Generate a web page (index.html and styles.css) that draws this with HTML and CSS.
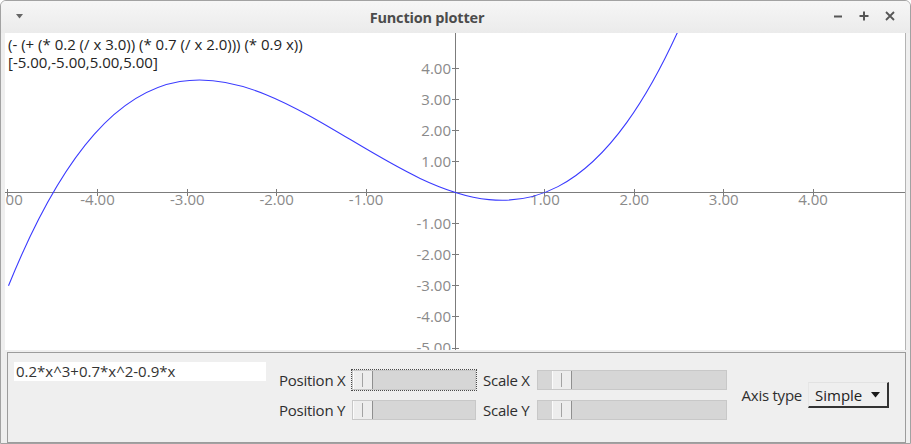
FILE: index.html
```html
<!DOCTYPE html>
<html>
<head>
<meta charset="utf-8">
<title>Function plotter</title>
<link rel="stylesheet" href="styles.css">
</head>
<body>
<div class="window">
  <div class="titlebar">
    <div class="tb-left">
      <svg class="menu-arrow" width="7" height="5" viewBox="0 0 7 5"><path d="M0 0H7L3.5 4.5Z" fill="#666"/></svg>
    </div>
    <div class="title">Function plotter</div>
    <div class="tb-buttons">
      <span class="tb-btn"><svg width="10" height="10" viewBox="0 0 10 10"><path d="M1 5.5H9" stroke="#565656" stroke-width="2"/></svg></span>
      <span class="tb-btn"><svg width="10" height="10" viewBox="0 0 10 10"><path d="M0.5 5H9.5M5 0.5V9.5" stroke="#565656" stroke-width="2"/></svg></span>
      <span class="tb-btn"><svg width="10" height="10" viewBox="0 0 10 10"><path d="M1 1L9 9M9 1L1 9" stroke="#565656" stroke-width="1.8"/></svg></span>
    </div>
  </div>
  <div class="content">
    <div class="plot">
      <svg class="plot-svg" width="900" height="317" viewBox="5 33 900 317">
        <g class="axes" stroke="#7c7c7c" stroke-width="1" fill="none">
          <path d="M5 192.5H905"/>
          <path d="M455.5 33V350"/>
          <path d="M7.5 189V196M97.5 189V196M187.5 189V196M276.5 189V196M366.5 189V196M544.5 189V196M634.5 189V196M723.5 189V196M813.5 189V196"/>
          <path d="M452 68.5H459M452 99.5H459M452 130.5H459M452 161.5H459M452 223.5H459M452 254.5H459M452 285.5H459M452 316.5H459M452 348.5H459"/>
        </g>
        <g class="xlabels" text-anchor="middle">
          <text x="5.5" y="204.5">-5.00</text>
          <text x="97.5" y="204.5">-4.00</text>
          <text x="187.3" y="204.5">-3.00</text>
          <text x="276.7" y="204.5">-2.00</text>
          <text x="366.1" y="204.5">-1.00</text>
          <text x="544.9" y="204.5">1.00</text>
          <text x="634.3" y="204.5">2.00</text>
          <text x="723.7" y="204.5">3.00</text>
          <text x="813.1" y="204.5">4.00</text>
        </g>
        <g class="ylabels" text-anchor="end">
          <text x="451" y="73.5">4.00</text>
          <text x="451" y="104.5">3.00</text>
          <text x="451" y="135.6">2.00</text>
          <text x="451" y="166.7">1.00</text>
          <text x="451" y="228.9">-1.00</text>
          <text x="451" y="260">-2.00</text>
          <text x="451" y="291.1">-3.00</text>
          <text x="451" y="322.2">-4.00</text>
          <text x="451" y="353.3">-5.00</text>
        </g>
        <path class="curve" d="M8.5 285.8C306.5 -450.23 604.5 1198.07 902.5 -989.3" fill="none" stroke="#3b3bff" stroke-width="1.1"/>
      </svg>
      <div class="expr">
        <div>(- (+ (* 0.2 (/ x 3.0)) (* 0.7 (/ x 2.0))) (* 0.9 x))</div>
        <div>[-5.00,-5.00,5.00,5.00]</div>
      </div>
    </div>
    <div class="panel">
      <div class="formula">0.2*x^3+0.7*x^2-0.9*x</div>
      <div class="sliders">
        <span class="label">Position X</span>
        <div class="slider focused"><div class="handle"></div></div>
        <span class="label">Scale X</span>
        <div class="slider"><div class="handle handle-scale"></div></div>
        <span class="label">Position Y</span>
        <div class="slider"><div class="handle"></div></div>
        <span class="label">Scale Y</span>
        <div class="slider"><div class="handle handle-scale"></div></div>
      </div>
      <div class="axis">
        <span class="label">Axis type</span>
        <div class="combo">
          <span class="combo-text">Simple</span>
          <svg class="combo-arrow" width="9" height="6" viewBox="0 0 9 6"><path d="M0 0H9L4.5 5.5Z" fill="#1a1a1a"/></svg>
        </div>
      </div>
    </div>
  </div>
</div>
</body>
</html>
```
FILE: styles.css
```css
* {
  box-sizing: border-box;
}

html,
body {
  margin: 0;
  padding: 0;
}

body {
  width: 911px;
  height: 444px;
  overflow: hidden;
  background: #ffffff;
  font-family: "Open Sans", "Noto Sans", "DejaVu Sans", sans-serif;
}

.window {
  width: 911px;
  height: 444px;
  border: 1px solid #a2a2a2;
  border-radius: 6px 6px 0 0;
  background: #efefef;
  display: flex;
  flex-direction: column;
  overflow: hidden;
}

.titlebar {
  height: 32px;
  flex: none;
  display: flex;
  align-items: center;
  background: linear-gradient(#f6f6f6, #ebebeb);
}

.tb-left {
  width: 28px;
  padding-left: 15px;
  display: flex;
  align-items: center;
}

.menu-arrow {
  margin-top: -2px;
}

.title {
  flex: 1;
  text-align: center;
  font-weight: 700;
  font-size: 14.5px;
  color: #4b4b4b;
  letter-spacing: -0.2px;
}

.tb-buttons {
  display: flex;
  padding-right: 7px;
}

.tb-btn {
  width: 26px;
  height: 20px;
  display: flex;
  align-items: center;
  justify-content: center;
  margin-top: -2px;
}

.content {
  flex: 1;
  display: flex;
  flex-direction: column;
  padding: 0 4px 0 4px;
}

.plot {
  height: 317px;
  flex: none;
  position: relative;
  background: #ffffff;
  border-right: 1px solid #b4b4b4;
  overflow: hidden;
}

.plot-svg {
  display: block;
  overflow: hidden;
}

.plot-svg text {
  font-family: "Open Sans", "Noto Sans", sans-serif;
  font-size: 15px;
  fill: #8a8a8a;
}

.expr {
  position: absolute;
  left: 3px;
  top: 2px;
  font-size: 15px;
  line-height: 18px;
  color: #242424;
  white-space: nowrap;
}

.panel {
  margin: 2px 0 0 2px;
  height: 91px;
  flex: none;
  border: 1px solid #9c9c9c;
  display: flex;
  align-items: flex-start;
  padding-left: 6px;
}

.formula {
  margin-top: 9px;
  width: 252px;
  height: 19px;
  background: #ffffff;
  padding-left: 2px;
  font-size: 15px;
  line-height: 19px;
  color: #333333;
  white-space: nowrap;
}

.sliders {
  margin-left: 13px;
  margin-top: 12px;
  display: grid;
  grid-template-columns: 66px 124px 47px 190px;
  grid-auto-rows: 30px;
  column-gap: 7px;
  align-items: center;
}

.label {
  font-size: 15px;
  color: #2e2e2e;
  white-space: nowrap;
  letter-spacing: -0.25px;
}

.slider {
  height: 20px;
  border: 1px solid #c8c8c8;
  background: #d6d6d6;
  display: flex;
}

.focused {
  outline: 1px dotted #4a4a4a;
}

.handle {
  width: 20px;
  height: 100%;
  position: relative;
  background: #ededed;
  border-left: 1px solid #fbfbfb;
  border-right: 1px solid #8f8f8f;
}

.handle::after {
  content: "";
  position: absolute;
  left: 8px;
  top: 2px;
  bottom: 2px;
  width: 1px;
  background: #a3a3a3;
}

.handle-scale {
  margin-left: 14px;
}

.axis {
  margin-left: auto;
  margin-right: 16px;
  margin-top: 29px;
  display: flex;
  align-items: center;
  gap: 6px;
}

.combo {
  width: 81px;
  height: 26px;
  display: flex;
  align-items: center;
  padding-left: 6px;
  background: #efefef;
  border-top: 1px solid #e2e2e2;
  border-left: 1px solid #e6e6e6;
  border-right: 2px solid #333333;
  border-bottom: 2px solid #333333;
  font-size: 15px;
  color: #222222;
}

.combo-arrow {
  margin-left: auto;
  margin-right: 7px;
}
```
